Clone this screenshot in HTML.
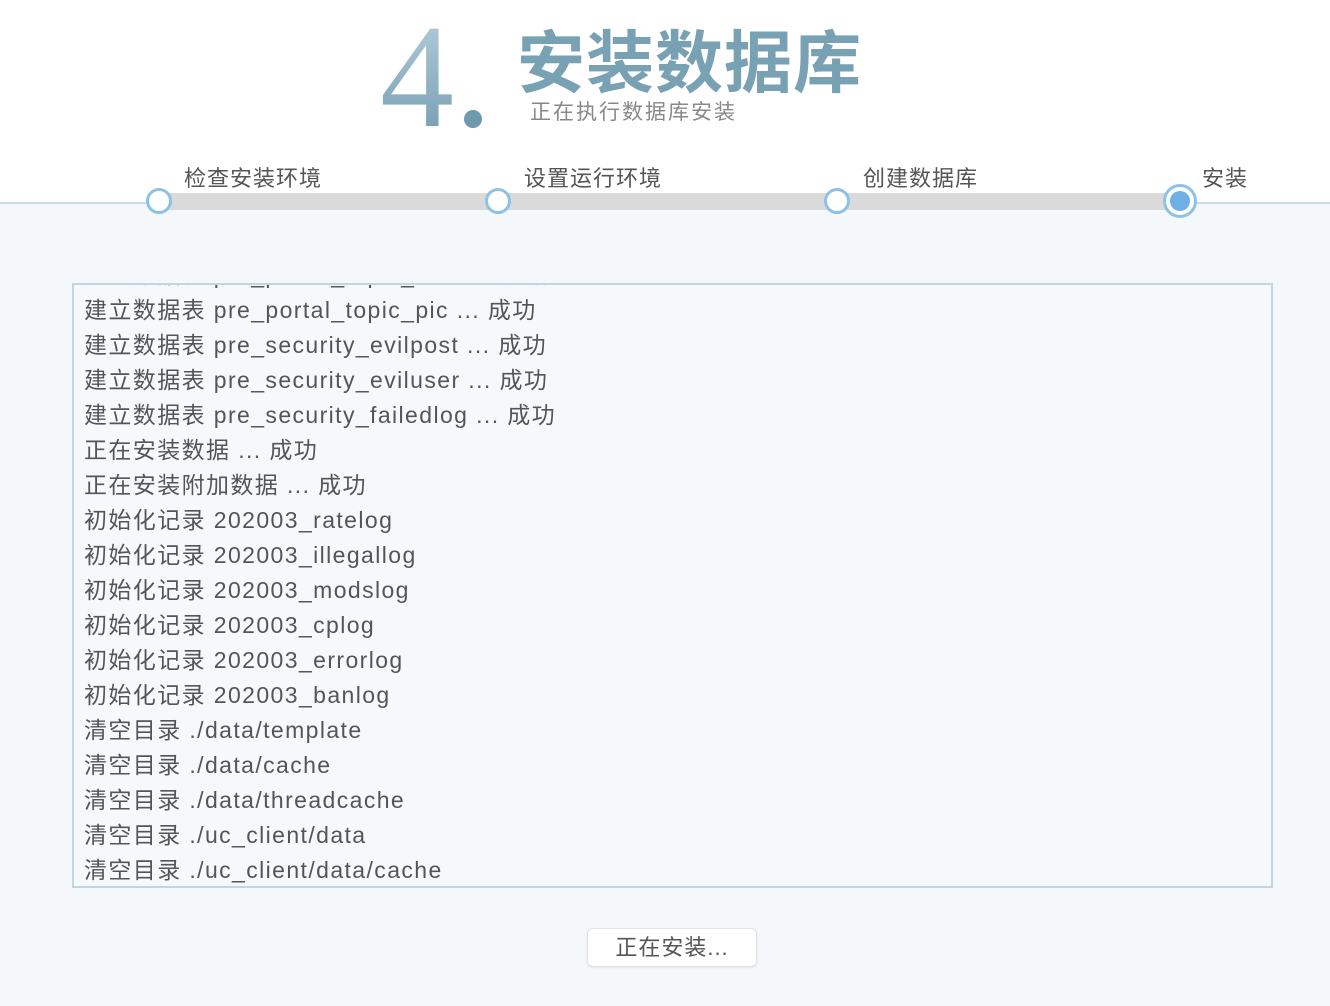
<!DOCTYPE html>
<html><head><meta charset="utf-8">
<style>
*{margin:0;padding:0;box-sizing:border-box}
html,body{width:1330px;height:1006px;overflow:hidden;background:#f4f8fb;font-family:"Liberation Sans","Noto Sans CJK SC",sans-serif}
.top{position:absolute;left:0;top:0;width:1330px;height:203px;background:#fff}
.num{position:absolute;left:380px;top:3px;font-family:"Liberation Serif",serif;font-size:148px;line-height:148px;background:linear-gradient(#b8d0dc,#6f9aae);-webkit-background-clip:text;background-clip:text;color:transparent}
.dot{position:absolute;left:464px;top:110px;width:18px;height:18px;border-radius:50%;background:#6f9aae}
.title{position:absolute;left:517px;top:16px;font-size:68px;line-height:84px;font-weight:bold;color:#78a2b4;letter-spacing:1px;font-family:"Noto Sans CJK SC",sans-serif}
.sub{position:absolute;left:530px;top:98px;font-size:21px;line-height:30px;color:#888;letter-spacing:2px}
.hl{position:absolute;top:202px;height:2px;background:#c9dbe5}
.bar{position:absolute;left:160px;top:193px;width:1020px;height:17px;background:#dadada}
.c{position:absolute;width:26px;height:26px;border-radius:50%;border:3px solid #8cc1e8;background:#fff;top:188px}
.lab{position:absolute;top:164px;font-size:22px;line-height:30px;color:#555;letter-spacing:1px}
.box{position:absolute;left:72px;top:283px;width:1201px;height:605px;border:2px solid #c3d6e0;background:#f6f9fb;overflow:hidden}
.in{position:absolute;left:10px;top:-27px;font-size:23px;line-height:35px;color:#555;white-space:nowrap;letter-spacing:1.4px}
.btn{position:absolute;left:587px;top:928px;width:170px;height:39px;border:1px solid #dde3e7;border-radius:6px;background:#fff;font-size:22px;line-height:37px;text-align:center;color:#555;letter-spacing:1px;box-shadow:0 1px 2px rgba(0,0,0,.08)}
</style></head><body>
<div class="top"></div>
<div class="num">4</div><div class="dot"></div>
<div class="title">安装数据库</div>
<div class="sub">正在执行数据库安装</div>
<div class="hl" style="left:0;width:160px"></div>
<div class="hl" style="left:1180px;width:150px"></div>
<div class="bar"></div>
<div class="c" style="left:146px"></div>
<div class="c" style="left:485px"></div>
<div class="c" style="left:824px"></div>
<div class="c" style="left:1163px;top:184px;width:34px;height:34px;border:3px solid #8cc1e8;background:#fff"><div style="position:absolute;left:4px;top:4px;width:20px;height:20px;border-radius:50%;background:#6fb1e4"></div></div>
<div class="lab" style="left:184px">检查安装环境</div>
<div class="lab" style="left:524px">设置运行环境</div>
<div class="lab" style="left:863px">创建数据库</div>
<div class="lab" style="left:1202px">安装</div>
<div class="box"><div class="in">
建立数据表 pre_portal_topic_item ... 成功<br>
建立数据表 pre_portal_topic_pic ... 成功<br>
建立数据表 pre_security_evilpost ... 成功<br>
建立数据表 pre_security_eviluser ... 成功<br>
建立数据表 pre_security_failedlog ... 成功<br>
正在安装数据 ... 成功<br>
正在安装附加数据 ... 成功<br>
初始化记录 202003_ratelog<br>
初始化记录 202003_illegallog<br>
初始化记录 202003_modslog<br>
初始化记录 202003_cplog<br>
初始化记录 202003_errorlog<br>
初始化记录 202003_banlog<br>
清空目录 ./data/template<br>
清空目录 ./data/cache<br>
清空目录 ./data/threadcache<br>
清空目录 ./uc_client/data<br>
清空目录 ./uc_client/data/cache
</div></div>
<div class="btn">正在安装...</div>
</body></html>
